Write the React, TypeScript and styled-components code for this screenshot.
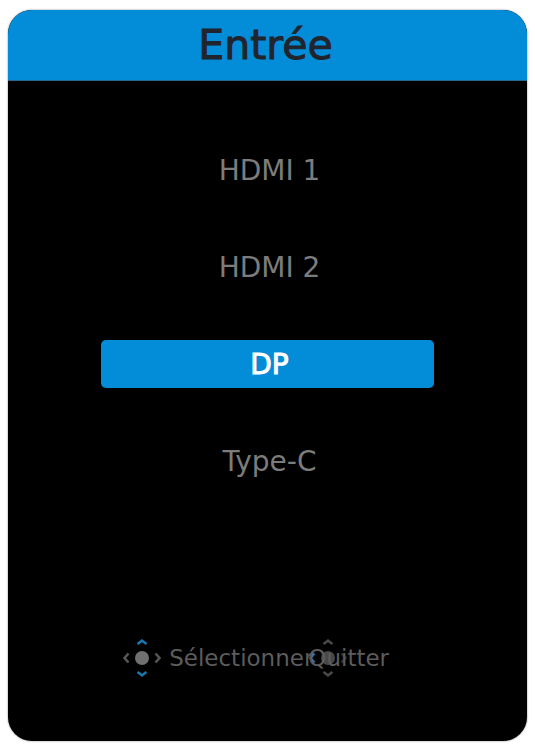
import React, { useState } from "react";
import styled, { createGlobalStyle } from "styled-components";

const GlobalStyle = createGlobalStyle`
  * { box-sizing: border-box; }
  body {
    margin: 0;
    background: #fff;
    font-family: "DejaVu Sans", sans-serif;
  }
`;

const Panel = styled.main`
  margin: 10px 8px 4px;
  border-radius: 24px;
  overflow: hidden;
  background: #000;
  box-shadow: 0 0 2px #777;
`;

const Header = styled.header`
  display: flex;
  justify-content: center;
  padding: 12px 0 11px;
  background: #038dd8;
  border-bottom: 1px solid #28688c;
`;

const Title = styled.h1`
  margin: 0;
  padding-right: 4px;
  font-size: 41px;
  line-height: 47px;
  font-weight: 400;
  color: #20242c;
  -webkit-text-stroke: 1px #20242c;
`;

const Options = styled.nav`
  display: flex;
  flex-direction: column;
  align-items: center;
  gap: 49px;
  padding: 65px 0 153px;
`;

const Option = styled.button<{ $active: boolean }>`
  width: 64%;
  height: 48px;
  padding: 2px 0 0 4px;
  border: 0;
  border-radius: 5px;
  background: ${(p) => (p.$active ? "#038dd8" : "transparent")};
  color: ${(p) => (p.$active ? "#fff" : "#7c7c7c")};
  -webkit-text-stroke: ${(p) => (p.$active ? "1px #fff" : "0")};
  font-family: inherit;
  font-size: 28px;
  line-height: 46px;
  cursor: pointer;
`;

const Footer = styled.footer`
  display: flex;
  align-items: center;
  padding: 0 0 63px 22%;
`;

const Hint = styled.div`
  display: flex;
  align-items: center;
  gap: 7px;
`;

const StackedHint = styled.div`
  display: grid;
  align-items: center;
  margin-left: -5px;

  > * {
    grid-area: 1 / 1;
  }
`;

const HintText = styled.span`
  font-size: 23px;
  line-height: 40px;
  color: #5c5c5c;
`;

const Pad = styled.svg`
  display: block;
  width: 40px;
  height: 40px;
  fill: none;
  stroke-width: 2.6;
`;

type JoystickProps = { vertical: string; left: string; right: string; knob: string };

function Joystick({ vertical, left, right, knob }: JoystickProps) {
  return (
    <Pad viewBox="0 0 40 40" aria-hidden="true">
      <circle cx="20" cy="20" r="7" fill={knob} />
      <path d="M15.5 6 20 2.6 24.5 6" stroke={vertical} />
      <path d="M15.5 34 20 37.4 24.5 34" stroke={vertical} />
      <path d="M6.5 15.5 2.5 20 6.5 24.5" stroke={left} />
      <path d="M33.5 15.5 37.5 20 33.5 24.5" stroke={right} />
    </Pad>
  );
}

const inputs = ["HDMI 1", "HDMI 2", "DP", "Type-C"];

export default function App() {
  const [selected, setSelected] = useState("DP");

  return (
    <>
      <GlobalStyle />
      <Panel>
        <Header>
          <Title>Entrée</Title>
        </Header>
        <Options aria-label="Entrée">
          {inputs.map((name) => (
            <Option
              key={name}
              type="button"
              $active={name === selected}
              aria-pressed={name === selected}
              onClick={() => setSelected(name)}
            >
              {name}
            </Option>
          ))}
        </Options>
        <Footer>
          <Hint>
            <Joystick vertical="#1976a8" left="#555" right="#555" knob="#707070" />
            <HintText>Sélectionner</HintText>
          </Hint>
          <StackedHint>
            <Joystick vertical="#484848" left="#1976a8" right="#303030" knob="#484848" />
            <HintText>Quitter</HintText>
          </StackedHint>
        </Footer>
      </Panel>
    </>
  );
}
